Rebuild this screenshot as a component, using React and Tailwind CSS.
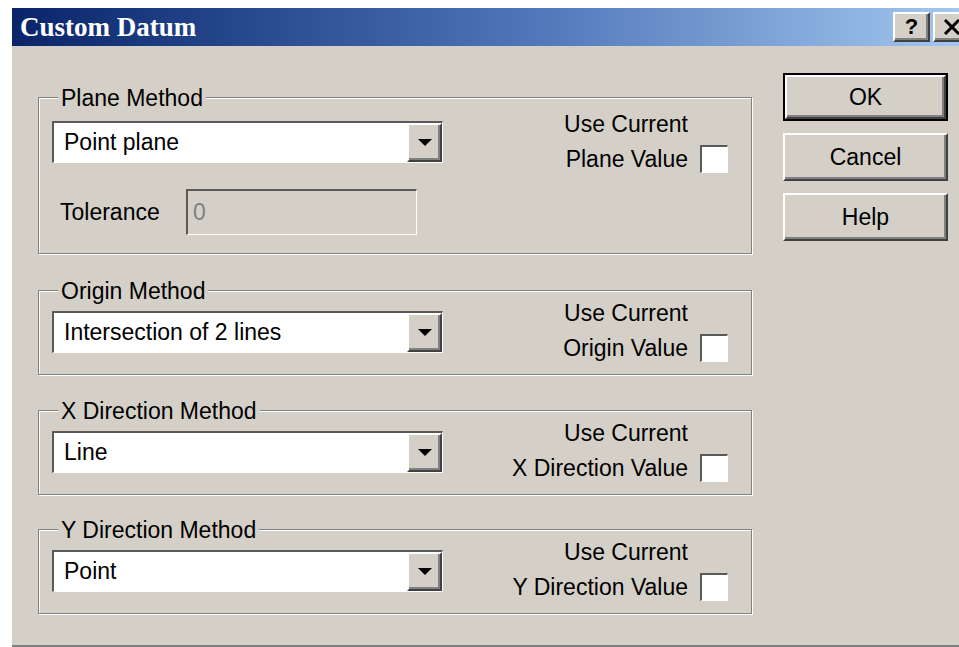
import React from "react";

const face = { fontFamily: '"Liberation Sans", Arial, sans-serif' };

// sunken 3D edge used by edit fields, combos and checkboxes
const sunken =
  "border-t-2 border-l-2 border-b border-r border-t-[#5a5a5a] border-l-[#5a5a5a] border-b-white border-r-white";

const raised =
  "border-t-2 border-l-2 border-b-2 border-r-2 border-t-white border-l-white border-b-[#404040] border-r-[#404040] shadow-[inset_-2px_-2px_0_#808080]";

const DownArrow = () => (
  <svg width="14" height="8" viewBox="0 0 14 8">
    <polygon points="0,0 14,0 7,7" fill="#000" />
  </svg>
);

const Combo = ({ value }) => (
  <div className={`flex h-[42px] w-[391px] bg-white ${sunken}`}>
    <div className="flex flex-1 items-center pl-[10px] text-[23px] text-black">
      {value}
    </div>
    <div
      className={`flex w-[35px] items-center justify-center bg-[#d4d0c8] ${raised}`}
    >
      <DownArrow />
    </div>
  </div>
);

const CheckBox = () => <div className={`h-[28px] w-[28px] bg-white ${sunken}`} />;

const UseCurrent = ({ label }) => (
  <div className="grid grid-cols-[auto_28px] items-center gap-x-[12px] gap-y-[8px] text-[23px] text-black">
    <span className="text-right leading-[26px]">Use Current</span>
    <span />
    <span className="text-right leading-[28px]">{label}</span>
    <CheckBox />
  </div>
);

const Group = ({ title, children, className = "" }) => (
  <div
    className={`relative w-[714px] border border-[#808080] shadow-[inset_1px_1px_0_#fff,1px_1px_0_#fff] ${className}`}
  >
    <span className="absolute left-[19px] top-0 -translate-y-1/2 bg-[#d4d0c8] px-[3px] text-[23px] leading-[26px] text-black">
      {title}
    </span>
    {children}
  </div>
);

const MethodGroup = ({ title, value, label, className }) => (
  <Group title={title} className={className}>
    <div className="flex justify-between pl-[13px] pr-[23px]">
      <div className="pb-[21px] pt-[20px]">
        <Combo value={value} />
      </div>
      <div className="pt-[9px]">
        <UseCurrent label={label} />
      </div>
    </div>
  </Group>
);

const DialogButton = ({ label }) => (
  <button
    className={`flex h-[48px] w-[165px] items-center justify-center bg-[#d4d0c8] text-[23px] text-black ${raised}`}
  >
    {label}
  </button>
);

const TitleButton = ({ children }) => (
  <div
    className={`flex h-[30px] w-[37px] items-center justify-center bg-[#d4d0c8] text-[22px] font-bold leading-none text-black ${raised}`}
  >
    {children}
  </div>
);

export default function App() {
  return (
    <div
      className="h-[647px] w-[959px] overflow-hidden bg-white pl-[12px] pt-[8px]"
      style={face}
    >
      <div className="flex h-[639px] w-[960px] flex-col">
        <div className="flex h-[38px] items-center bg-gradient-to-r from-[#0a246a] via-[#4a6fb4] to-[#a6caf0] pl-[8px] pr-[2px]">
          <span
            className="text-[27px] font-bold leading-none text-white"
            style={{ fontFamily: '"Liberation Serif", "Times New Roman", serif' }}
          >
            Custom Datum
          </span>
          <div className="ml-auto flex gap-[3px]">
            <TitleButton>?</TitleButton>
            <TitleButton>
              <svg width="18" height="16" viewBox="0 0 18 16">
                <path d="M2 1 L16 15 M16 1 L2 15" stroke="#000" strokeWidth="3" />
              </svg>
            </TitleButton>
          </div>
        </div>

        <div className="flex flex-1 border-b-2 border-[#808080] bg-[#d4d0c8] pl-[26px]">
          <div className="flex flex-col pt-[51px]">
            <Group title="Plane Method">
              <div className="flex justify-between pl-[13px] pr-[23px]">
                <div className="pb-[18px] pt-[23px]">
                  <Combo value="Point plane" />
                  <div className="mt-[26px] flex items-center">
                    <span className="w-[134px] pl-[8px] text-[23px] text-black">
                      Tolerance
                    </span>
                    <div
                      className={`flex h-[46px] w-[231px] items-center bg-[#d4d0c8] pl-[5px] text-[23px] text-[#808080] ${sunken}`}
                    >
                      0
                    </div>
                  </div>
                </div>
                <div className="pt-[13px]">
                  <UseCurrent label="Plane Value" />
                </div>
              </div>
            </Group>
            <MethodGroup
              className="mt-[36px]"
              title="Origin Method"
              value="Intersection of 2 lines"
              label="Origin Value"
            />
            <MethodGroup
              className="mt-[35px]"
              title="X Direction Method"
              value="Line"
              label="X Direction Value"
            />
            <MethodGroup
              className="mt-[34px]"
              title="Y Direction Method"
              value="Point"
              label="Y Direction Value"
            />
          </div>

          <div className="ml-[31px] flex flex-col gap-[12px] pt-[27px]">
            <div className="flex h-[48px] w-[165px] border-2 border-black">
              <button
                className={`flex flex-1 items-center justify-center bg-[#d4d0c8] text-[23px] text-black ${raised}`}
              >
                OK
              </button>
            </div>
            <DialogButton label="Cancel" />
            <DialogButton label="Help" />
          </div>
        </div>
      </div>
    </div>
  );
}
